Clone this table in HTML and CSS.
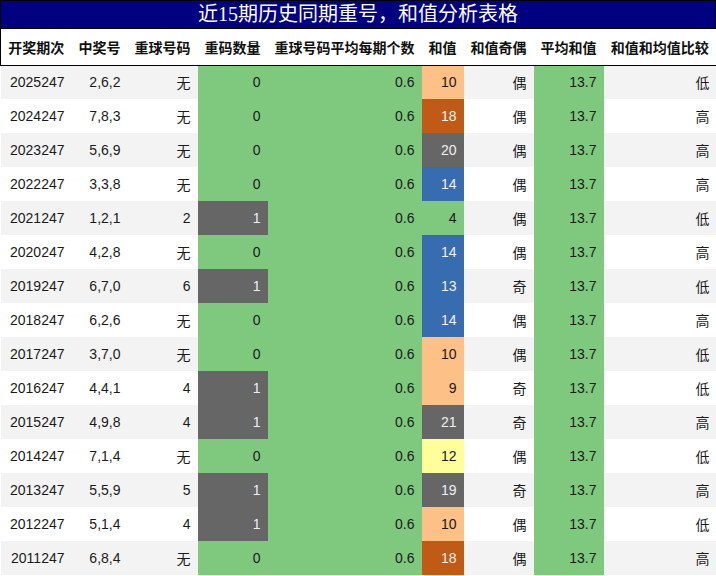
FILE: index.html
```html
<!DOCTYPE html>
<html lang="zh">
<head>
<meta charset="utf-8">
<title>近15期历史同期重号，和值分析表格</title>
<link rel="stylesheet" href="styles.css">
</head>
<body>
<div class="sheet">
  <div class="title">近15期历史同期重号，和值分析表格</div>
  <table class="grid">
    <colgroup>
      <col class="c1"><col class="c2"><col class="c3"><col class="c4"><col class="c5"><col class="c6"><col class="c7"><col class="c8"><col class="c9">
    </colgroup>
    <thead>
      <tr><th>开奖期次</th><th>中奖号</th><th>重球号码</th><th>重码数量</th><th>重球号码平均每期个数</th><th>和值</th><th>和值奇偶</th><th>平均和值</th><th>和值和均值比较</th></tr>
    </thead>
    <tbody>
      <tr class="odd"><td>2025247</td><td>2,6,2</td><td>无</td><td class="g">0</td><td class="g">0.6</td><td class="lo">10</td><td>偶</td><td class="g">13.7</td><td>低</td></tr>
      <tr><td>2024247</td><td>7,8,3</td><td>无</td><td class="g">0</td><td class="g">0.6</td><td class="do">18</td><td>偶</td><td class="g">13.7</td><td>高</td></tr>
      <tr class="odd"><td>2023247</td><td>5,6,9</td><td>无</td><td class="g">0</td><td class="g">0.6</td><td class="k">20</td><td>偶</td><td class="g">13.7</td><td>高</td></tr>
      <tr><td>2022247</td><td>3,3,8</td><td>无</td><td class="g">0</td><td class="g">0.6</td><td class="b">14</td><td>偶</td><td class="g">13.7</td><td>高</td></tr>
      <tr class="odd"><td>2021247</td><td>1,2,1</td><td>2</td><td class="k">1</td><td class="g">0.6</td><td class="g">4</td><td>偶</td><td class="g">13.7</td><td>低</td></tr>
      <tr><td>2020247</td><td>4,2,8</td><td>无</td><td class="g">0</td><td class="g">0.6</td><td class="b">14</td><td>偶</td><td class="g">13.7</td><td>高</td></tr>
      <tr class="odd"><td>2019247</td><td>6,7,0</td><td>6</td><td class="k">1</td><td class="g">0.6</td><td class="b">13</td><td>奇</td><td class="g">13.7</td><td>低</td></tr>
      <tr><td>2018247</td><td>6,2,6</td><td>无</td><td class="g">0</td><td class="g">0.6</td><td class="b">14</td><td>偶</td><td class="g">13.7</td><td>高</td></tr>
      <tr class="odd"><td>2017247</td><td>3,7,0</td><td>无</td><td class="g">0</td><td class="g">0.6</td><td class="lo">10</td><td>偶</td><td class="g">13.7</td><td>低</td></tr>
      <tr><td>2016247</td><td>4,4,1</td><td>4</td><td class="k">1</td><td class="g">0.6</td><td class="lo">9</td><td>奇</td><td class="g">13.7</td><td>低</td></tr>
      <tr class="odd"><td>2015247</td><td>4,9,8</td><td>4</td><td class="k">1</td><td class="g">0.6</td><td class="k">21</td><td>奇</td><td class="g">13.7</td><td>高</td></tr>
      <tr><td>2014247</td><td>7,1,4</td><td>无</td><td class="g">0</td><td class="g">0.6</td><td class="y">12</td><td>偶</td><td class="g">13.7</td><td>低</td></tr>
      <tr class="odd"><td>2013247</td><td>5,5,9</td><td>5</td><td class="k">1</td><td class="g">0.6</td><td class="k">19</td><td>奇</td><td class="g">13.7</td><td>高</td></tr>
      <tr><td>2012247</td><td>5,1,4</td><td>4</td><td class="k">1</td><td class="g">0.6</td><td class="lo">10</td><td>偶</td><td class="g">13.7</td><td>低</td></tr>
      <tr class="odd"><td>2011247</td><td>6,8,4</td><td>无</td><td class="g">0</td><td class="g">0.6</td><td class="do">18</td><td>偶</td><td class="g">13.7</td><td>高</td></tr>
    </tbody>
  </table>
</div>
</body>
</html>
```

FILE: styles.css
```css
html, body {
  margin: 0;
  padding: 0;
  background: #ffffff;
}

.sheet {
  width: 716px;
  font-family: "Liberation Sans", "Noto Sans CJK SC", sans-serif;
  color: #1a1a1a;
}

.title {
  box-sizing: border-box;
  height: 29px;
  background: #000080;
  border: 1px solid #000000;
  color: #ffffff;
  font-family: "Liberation Serif", "Noto Sans CJK SC", serif;
  font-size: 20px;
  line-height: 27px;
  text-align: center;
}

.grid {
  width: 716px;
  table-layout: fixed;
  border-collapse: collapse;
  border-spacing: 0;
}

.c1 { width: 71px; }
.c2 { width: 56px; }
.c3 { width: 70px; }
.c4 { width: 70px; }
.c5 { width: 154px; }
.c6 { width: 42px; }
.c7 { width: 70px; }
.c8 { width: 70px; }
.c9 { width: 113px; }

.grid th {
  height: 36px;
  padding: 0 6px;
  font-family: "Noto Sans CJK SC", sans-serif;
  font-size: 14px;
  font-weight: bold;
  color: #111111;
  text-align: center;
  white-space: nowrap;
  border-bottom: 1px solid #000000;
  box-sizing: border-box;
}

.grid thead tr {
  border-left: 1px solid #000000;
  border-right: 1px solid #000000;
}

.grid td {
  height: 34px;
  padding: 0 7px;
  font-size: 14px;
  text-align: right;
  vertical-align: middle;
  white-space: nowrap;
  box-sizing: border-box;
}

.grid tbody tr { background: #ffffff; }
.grid tbody tr.odd { background: #f3f3f3; }

.grid td.g { background: #7fc97f; color: #1a1a1a; }
.grid td.k { background: #666666; color: #f0f0f0; }
.grid td.lo { background: #fdc086; color: #1a1a1a; }
.grid td.do { background: #bf5b17; color: #f0f0f0; }
.grid td.b { background: #386cb0; color: #f0f0f0; }
.grid td.y { background: #ffff99; color: #1a1a1a; }
```
